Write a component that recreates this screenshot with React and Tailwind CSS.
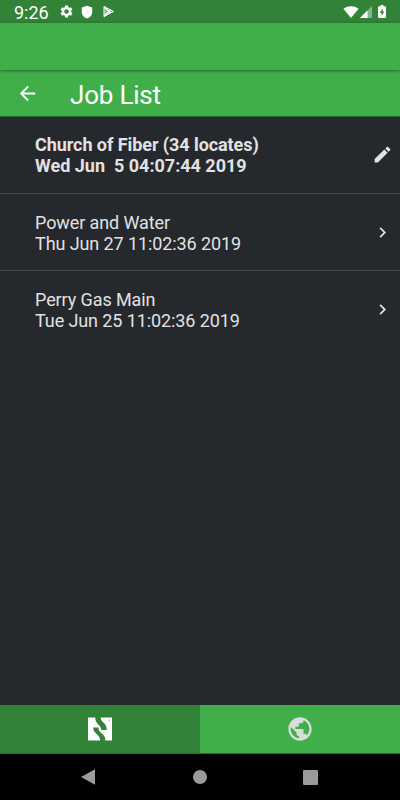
const JOBS = [
  { name: 'Church of Fiber (34 locates)', date: 'Wed Jun  5 04:07:44 2019', current: true },
  { name: 'Power and Water', date: 'Thu Jun 27 11:02:36 2019' },
  { name: 'Perry Gas Main', date: 'Tue Jun 25 11:02:36 2019' },
];

function Icon({ d, className }) {
  return (
    <svg viewBox="0 0 24 24" fill="currentColor" className={className}>
      <path d={d} />
    </svg>
  );
}

const GEAR =
  'M19.14 12.94c.04-.3.06-.61.06-.94s-.02-.64-.07-.94l2.03-1.58a.49.49 0 0 0 .12-.61l-1.92-3.32a.49.49 0 0 0-.59-.22l-2.39.96a7 7 0 0 0-1.62-.94l-.36-2.54a.48.48 0 0 0-.48-.41h-3.84a.47.47 0 0 0-.47.41l-.36 2.54a7.4 7.4 0 0 0-1.62.94l-2.39-.96a.48.48 0 0 0-.59.22L2.74 8.87a.47.47 0 0 0 .12.61l2.03 1.58a6 6 0 0 0-.02 1.88l-2.03 1.58a.49.49 0 0 0-.12.61l1.92 3.32c.12.22.37.29.59.22l2.39-.96c.5.38 1.03.7 1.62.94l.36 2.54c.05.24.24.41.48.41h3.84c.24 0 .44-.17.47-.41l.36-2.54a7 7 0 0 0 1.62-.94l2.39.96c.22.08.47 0 .59-.22l1.92-3.32a.47.47 0 0 0-.12-.61zM12 15.6a3.6 3.6 0 1 1 0-7.2 3.6 3.6 0 0 1 0 7.2z';
const BACK = 'M20 11H7.83l5.59-5.59L12 4l-8 8 8 8 1.41-1.41L7.83 13H20v-2z';
const PENCIL =
  'M3 17.25V21h3.75L17.81 9.94l-3.75-3.75L3 17.25zM20.71 7.04a1 1 0 0 0 0-1.41l-2.34-2.34a1 1 0 0 0-1.41 0l-1.83 1.83 3.75 3.75 1.83-1.83z';
const CHEVRON = 'M10 6L8.59 7.41 13.17 12l-4.58 4.59L10 18l6-6z';
const GLOBE =
  'M12 2C6.48 2 2 6.48 2 12s4.48 10 10 10 10-4.48 10-10S17.52 2 12 2zm-1 17.93c-3.95-.49-7-3.85-7-7.93 0-.62.08-1.21.21-1.79L9 15v1c0 1.1.9 2 2 2v1.93zm6.9-2.54c-.26-.81-1-1.39-1.9-1.39h-1v-3c0-.55-.45-1-1-1H8v-2h2c.55 0 1-.45 1-1V7h2c1.1 0 2-.9 2-2v-.41c2.93 1.19 5 4.06 5 7.41 0 2.08-.8 3.97-2.1 5.39z';

function StatusBar() {
  return (
    <div className="flex h-[23px] shrink-0 items-center bg-[#328237] pl-[14px] pr-[14px] text-white">
      <span className="w-[45px] pt-[3px] text-[18px] leading-[22px]">9:26</span>
      <Icon d={GEAR} className="size-[15px]" />
      <svg viewBox="0 0 12 14" className="ml-[7px] h-[14px] w-[12px]" fill="currentColor">
        <path d="M6 .7 11.2 2.6v4.6C11.2 10.2 9 12.5 6 13.4 3 12.5.8 10.2.8 7.2V2.6z" />
      </svg>
      <svg viewBox="0 0 13 13" className="ml-[9px] size-[13px]" fill="none" stroke="currentColor">
        <path d="M2 1.500v10l9.500-5z" strokeWidth="1" fill="#ffffff66" />
        <path d="M2 1.500l6.500 6.700M2 11.500l6.500-6.700" strokeWidth="1.300" />
      </svg>
      <svg viewBox="0 0 16 12" className="ml-auto h-[12px] w-[16px]" fill="currentColor">
        <path d="M8 12 .4 2.7C2.500 1 5 .2 8 .2s5.500.8 7.600 2.500z" />
      </svg>
      <svg viewBox="0 0 12 12" className="ml-[1px] size-[12px]" fill="currentColor">
        <path d="M12 0v12H0z" opacity=".4" />
        <path d="M7.500 4.500V12H0z" />
      </svg>
      <svg viewBox="0 0 8 13" className="ml-[6px] h-[13px] w-[8px]" fill="currentColor">
        <path fillRule="evenodd" d="M2.500 0h3v1.300h1.300q1.200 0 1.200 1v9.500q0 1.200-1.200 1.200H1.200Q0 13 0 11.800V2.300q0-1 1.200-1h1.300zM4.700 3.200 1.700 7.700h1.800v3.400l2.900-4.700H4.700z" />
      </svg>
    </div>
  );
}

function JobRow({ job }) {
  return (
    <li className="flex h-[77px] items-center border-b border-[#414549] pl-[35px] pr-[7px] last:border-transparent">
      <div
        className={
          job.current
            ? 'flex-1 whitespace-pre text-[18px] leading-[21px] font-bold'
            : 'flex-1 whitespace-pre pt-[2px] text-[18px] leading-[21px] tracking-[-0.1px]'
        }
      >
        <p className={job.current ? 'tracking-[-0.07px]' : ''}>{job.name}</p>
        <p>{job.date}</p>
      </div>
      <Icon d={job.current ? PENCIL : CHEVRON} className={job.current ? 'mb-px size-[21px]' : 'mt-px size-[21px]'} />
    </li>
  );
}

function Logo() {
  return (
    <svg viewBox="0 0 24 24" className="size-6">
      <path d="M0 .5h24v23H0z" fill="#fff" />
      <g fill="#328237">
        <path d="M7.200 0H12.700C12.700 2.500 13.400 3.500 15.200 5.200C17.800 7.700 18.700 9.500 18.700 13H13.200C13.200 10.800 12.500 9.600 10.500 7.700C7.800 5.100 7.200 3.300 7.200 0z" />
        <path d="M5.200 10.600H10.500C10.500 13.300 11.400 14.400 13.200 16C16.300 18.700 17.400 20.300 17.400 24H12C12 21 11.400 19.700 9.200 17.600C6.400 15 5.200 13.600 5.200 10.600z" />
        <circle cx="21.500" cy="3" r=".6" />
      </g>
    </svg>
  );
}

export default function App() {
  return (
    <div className="flex h-[800px] w-[400px] flex-col overflow-hidden bg-[#25282d] font-['Roboto',sans-serif]">
      <StatusBar />
      <div className="relative z-10 h-[47px] shrink-0 bg-[#41af49] shadow-[0_1px_3px_#00000070]" />
      <header className="flex h-[47px] shrink-0 items-center border-b border-[#25692a] bg-[#41af49] pl-[16px] text-white">
        <Icon d={BACK} className="size-[23px]" />
        <h1 className="ml-[31px] pt-[3px] text-[26px] leading-[30px] tracking-[-0.2px]">Job List</h1>
      </header>
      <ul className="flex-1 text-[#e2e2e2]">
        {JOBS.map((job) => (
          <JobRow key={job.name} job={job} />
        ))}
      </ul>
      <div className="flex h-[49px] shrink-0 border-b border-[#267029]">
        <div className="flex flex-1 items-center justify-center bg-[#328237]">
          <Logo />
        </div>
        <div className="flex flex-1 items-center justify-center bg-[#41af49] text-[#d9dcd9]">
          <Icon d={GLOBE} className="size-7" />
        </div>
      </div>
      <nav className="flex h-[46px] shrink-0 items-center justify-between bg-black pl-[81px] pr-[82px] text-[#9b9b9b]">
        <svg viewBox="0 0 14 16" className="h-[16px] w-[14px]" fill="currentColor">
          <path d="M14 .2v15.600L0 8z" />
        </svg>
        <div className="ml-[2px] size-[14px] rounded-full bg-[#9b9b9b]" />
        <div className="size-[15px] rounded-[1px] bg-[#9b9b9b]" />
      </nav>
    </div>
  );
}
